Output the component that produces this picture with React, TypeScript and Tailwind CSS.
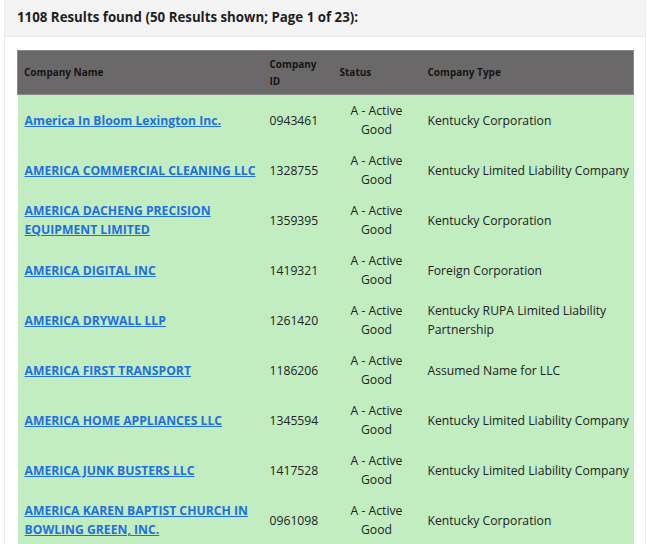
import React from "react";

const rows: [string, string, string][] = [
  ["America In Bloom Lexington Inc.", "0943461", "Kentucky Corporation"],
  ["AMERICA COMMERCIAL CLEANING LLC", "1328755", "Kentucky Limited Liability Company"],
  ["AMERICA DACHENG PRECISION EQUIPMENT LIMITED", "1359395", "Kentucky Corporation"],
  ["AMERICA DIGITAL INC", "1419321", "Foreign Corporation"],
  ["AMERICA DRYWALL LLP", "1261420", "Kentucky RUPA Limited Liability Partnership"],
  ["AMERICA FIRST TRANSPORT", "1186206", "Assumed Name for LLC"],
  ["AMERICA HOME APPLIANCES LLC", "1345594", "Kentucky Limited Liability Company"],
  ["AMERICA JUNK BUSTERS LLC", "1417528", "Kentucky Limited Liability Company"],
  ["AMERICA KAREN BAPTIST CHURCH IN BOWLING GREEN, INC.", "0961098", "Kentucky Corporation"],
];

export default function App() {
  return (
    <div
      className="w-[650px] h-[544px] overflow-hidden bg-white text-[#222]"
      style={{ fontFamily: '"Open Sans", "Noto Sans", sans-serif' }}
    >
      <div className="mx-[4px] border-x border-[#ececec] h-full">
        <div className="h-[37px] bg-[#f4f4f4] border-b border-[#e8e8e8] pl-[12px] flex items-center">
          <span className="text-[13.3px] font-bold text-[#1e1e1e]">
            1108 Results found (50 Results shown; Page 1 of 23):
          </span>
        </div>
        <div className="pt-[13px] pl-[12px] pr-[12px]">
          <table className="w-[616px] border-collapse table-fixed">
            <colgroup>
              <col className="w-[245px]" />
              <col className="w-[70px]" />
              <col className="w-[88px]" />
              <col className="w-[213px]" />
            </colgroup>
            <thead>
              <tr className="bg-[#6a6869] h-[44px]">
                <th className="text-left text-[10px] leading-[17px] font-bold text-[#151515] pl-[6px] pr-[7px] border-y border-l border-[#8a8a8a]">
                  Company Name
                </th>
                <th className="text-left text-[10px] leading-[17px] font-bold text-[#151515] px-[7px] border-y border-[#8a8a8a]">
                  Company ID
                </th>
                <th className="text-left text-[10px] leading-[17px] font-bold text-[#151515] px-[7px] border-y border-[#8a8a8a]">
                  Status
                </th>
                <th className="text-left text-[10px] leading-[17px] font-bold text-[#151515] px-[7px] border-y border-r border-[#8a8a8a]">
                  Company Type
                </th>
              </tr>
            </thead>
            <tbody>
              {rows.map(([name, id, type]) => (
                <tr key={id} className="bg-[#c1edc1] h-[50px] text-[12.2px] leading-[19px]">
                  <td className="pl-[7px] pr-[3px] py-[6px]">
                    <a href="#" className="font-bold text-[#1f6fe0] underline">
                      {name}
                    </a>
                  </td>
                  <td className="px-[7px] py-[6px] text-[#222]">{id}</td>
                  <td className="px-[7px] py-[6px] text-center text-[#222]">
                    A - Active
                    <br />
                    Good
                  </td>
                  <td className="pl-[7px] pr-0 py-[6px] text-[#222]">{type}</td>
                </tr>
              ))}
            </tbody>
          </table>
        </div>
      </div>
    </div>
  );
}
